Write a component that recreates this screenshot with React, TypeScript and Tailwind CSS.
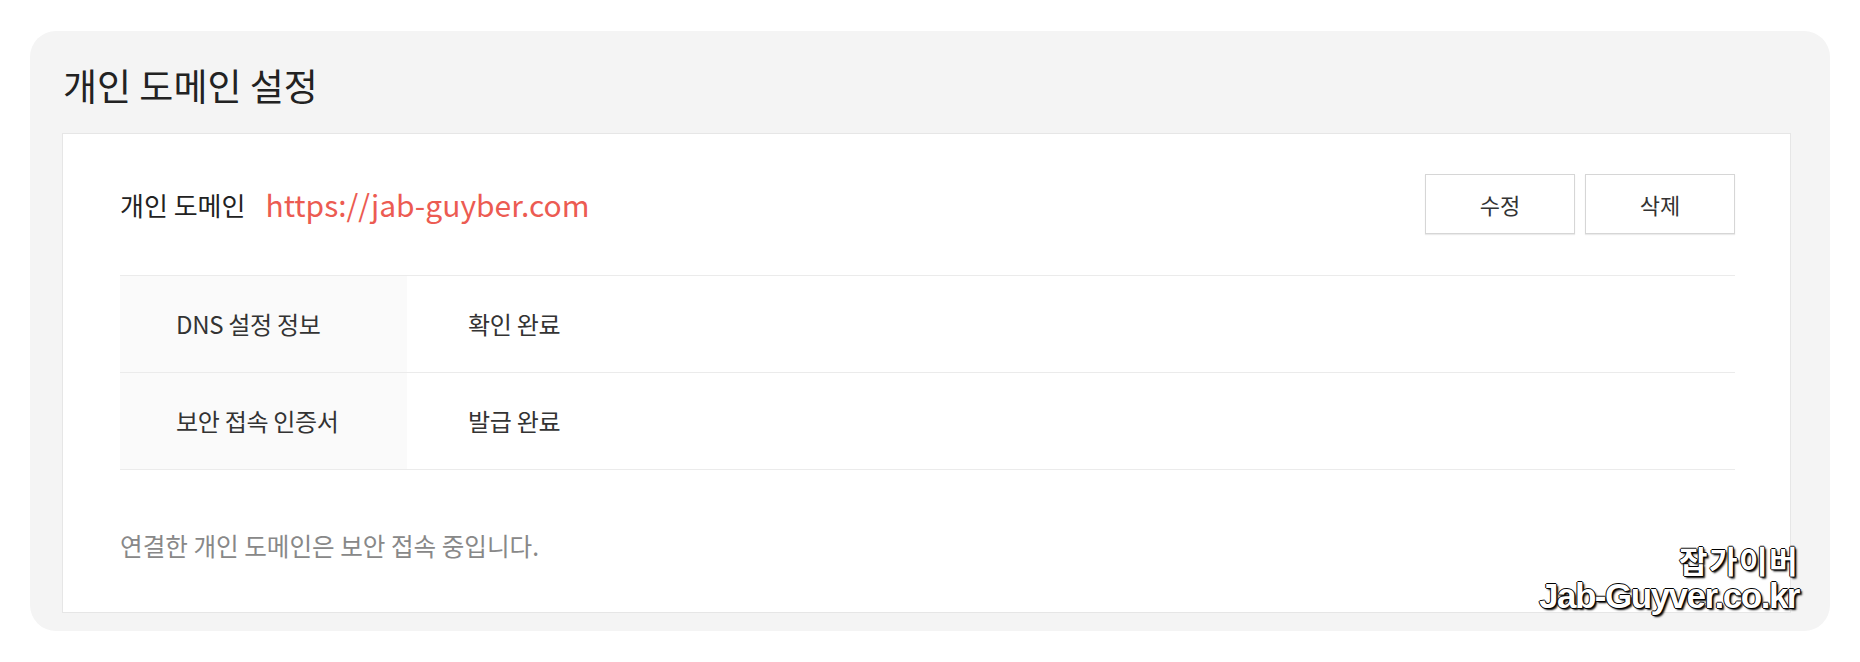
import React from 'react';

const rows = [
  { label: 'DNS 설정 정보', value: '확인 완료' },
  { label: '보안 접속 인증서', value: '발급 완료' },
];

export default function App() {
  return (
    <div className="min-h-screen bg-white px-[30px] pt-[31px] font-['Noto_Sans_CJK_KR','Noto_Sans',sans-serif]">
      <div className="relative rounded-[26px] bg-[#f4f4f4] pl-[32px] pr-[39px] pt-[28px] pb-[18px]">
        {/* Title */}
        <h2 className="ml-px text-[37px] leading-[52px] text-[#222] mb-[22px]">개인 도메인 설정</h2>

        {/* Card */}
        <div className="border border-[#e6e6e6] bg-white pl-[57px] pr-[55px]">
          <div className="flex items-center pt-[40px] pb-[41px]">
            <span className="text-[26px] text-[#222]">개인 도메인</span>
            <a className="ml-[20px] text-[30px] text-[#ec5b52]">https://jab-guyber.com</a>
            <div className="ml-auto flex gap-[10px]">
              <button className="h-[60px] w-[150px] border border-[#d6d6d6] bg-white text-[22px] text-[#333] shadow-[0_1px_1px_rgba(0,0,0,0.08)]">
                수정
              </button>
              <button className="h-[60px] w-[150px] border border-[#d6d6d6] bg-white text-[22px] text-[#333] shadow-[0_1px_1px_rgba(0,0,0,0.08)]">
                삭제
              </button>
            </div>
          </div>

          {/* Status table */}
          <div className="border-t border-[#ebebeb]">
            {rows.map(row => (
              <div key={row.label} className="flex h-[97px] border-b border-[#ebebeb]">
                <div className="flex w-[287px] items-center bg-[#fafafa] pl-[56px] text-[24px] tracking-[-0.3px] text-[#333]">
                  {row.label}
                </div>
                <div className="flex items-center pl-[61px] text-[24px] tracking-[-0.3px] text-[#333]">{row.value}</div>
              </div>
            ))}
          </div>

          <p className="mt-[57px] pb-[49px] text-[24.6px] leading-[36px] text-[#888]">
            연결한 개인 도메인은 보안 접속 중입니다.
          </p>
        </div>

        {/* Watermark */}
        <div className="absolute right-[31px] bottom-[16px] flex flex-col items-end font-bold text-white [text-shadow:-1px_0_0_#000,1px_0_0_#000,0_-1px_0_#000,0_1px_0_#000,2px_2px_2px_#000]">
          <span className="text-[31px] leading-[34px] tracking-[1.5px]">잡가이버</span>
          <span className="font-['Liberation_Sans',sans-serif] text-[35px] leading-[38px] tracking-[-1.5px]">
            Jab-Guyver.co.kr
          </span>
        </div>
      </div>
    </div>
  );
}
